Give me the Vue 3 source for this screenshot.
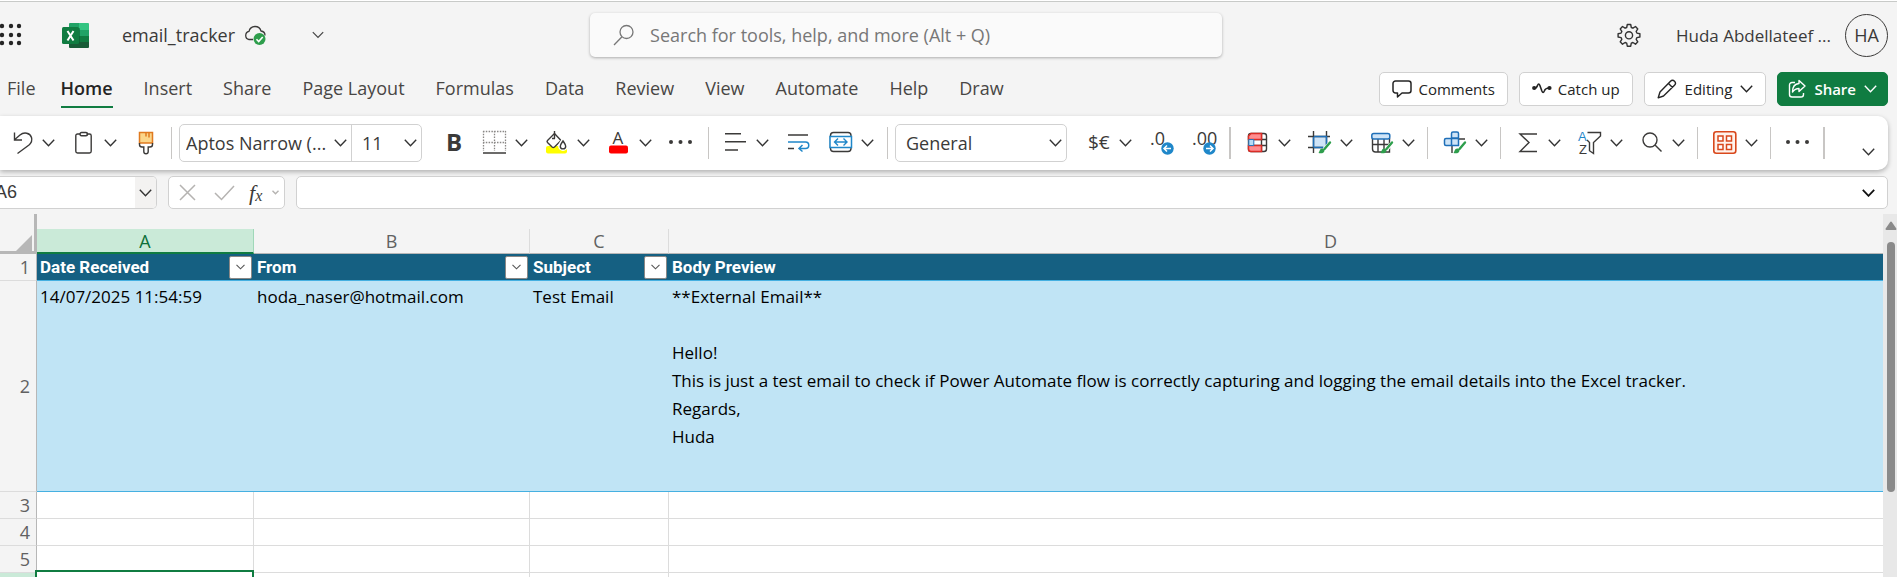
<script setup>
import { ref } from 'vue'

const ink = '#3b3a39'
const line = `fill="none" stroke="${ink}" stroke-width="1.4"`
const brush = '<path d="M22.5 11.5L16 19" fill="none" stroke="#fff" stroke-width="4"/><path d="M22 11.5l-5.500 6.500" fill="none" stroke="#2e9e4c" stroke-width="2.4" stroke-linecap="round"/><path d="M10.500 22c1-.8 1-4.500 3.800-4.500 2 0 3 2.500 1.200 4-1.300 1-3.300 1-5 .5z" fill="#2e9e4c"/>'

const icons = {
  undo: `<path ${line} d="M4.500 1.500v7.500H12M4.500 8.800L10 4c4-3.300 10-2.200 11.500 2.500.9 3-.3 5.500-2.500 7.500L7.500 22.500"/>`,
  paste: `<path ${line} d="M8.500 3H5.500a1.700 1.700 0 0 0-1.700 1.700v15.600A1.700 1.700 0 0 0 5.500 22h12a1.700 1.700 0 0 0 1.700-1.700V4.700A1.700 1.700 0 0 0 17.500 3h-3"/><rect ${line} x="8" y="1.500" width="7.500" height="3.300" rx="1.500"/>`,
  painter: `<path d="M5.500 1.500h13V12h-13z" fill="#fbd68a" stroke="#e07a1f" stroke-width="1.500"/><path d="M12 2v3.500M15 2v4.500" stroke="#e07a1f" stroke-width="1.500"/><path ${line} d="M5.500 12v1.500A2.500 2.500 0 0 0 8 16h1.800v4.500a2.200 2.200 0 0 0 4.400 0V16H16a2.500 2.500 0 0 0 2.500-2.500V12"/>`,
  bold: `<text x="4" y="20" font-size="24" font-weight="700" fill="${ink}">B</text>`,
  borders: `<path d="M0 .5h23M0 11.500h23M.5 0v20M11.500 0v20M22.500 0v20" stroke="#8a8886" stroke-width="1.300" stroke-dasharray="1.500 1.300"/><path d="M0 22h23" stroke="${ink}" stroke-width="1.500"/>`,
  fill: `<rect x="1" y="15" width="21" height="7.500" rx="2" fill="#ff0"/><path d="M2.500 9.500L9.500 2.500l6.500 7-6.500 6.500q-1.200 1-2.400 0L2.500 11.500q-.9-1 0-2z" fill="#fff" stroke="${ink}" stroke-width="1.400"/><path ${line} d="M9.500 0v7.500M7 7.500h3"/><path d="M18 9.500c-1.800 3-2.900 4-2.900 5.600a2.900 2.900 0 0 0 5.800 0c0-1.600-1.100-2.600-2.900-5.600z" fill="#fff" stroke="#fff" stroke-width="4"/><path d="M18 10c-1.800 2.700-2.700 3.700-2.700 5.200a2.700 2.700 0 0 0 5.400 0c0-1.500-.9-2.500-2.700-5.200z" fill="#fff" stroke="${ink}" stroke-width="1.400"/>`,
  color: `<text x="5.500" y="12.500" font-size="17" fill="${ink}">A</text><rect x="2" y="14.500" width="19" height="8" rx="2" fill="#f00"/>`,
  more: `<g fill="${ink}"><circle cx="2" cy="11" r="2"/><circle cx="11.500" cy="11" r="2"/><circle cx="21" cy="11" r="2"/></g>`,
  align: `<path ${line} d="M1 2.800h16M1 10.800h21M1 19h13"/>`,
  wrap: `<path ${line} d="M1 4h20M1 17.500h6"/><path d="M1 11h17.500a3.200 3.200 0 0 1 0 6.500H12m3.500-3.500L12 17.500l3.500 3" fill="none" stroke="#1f87c9" stroke-width="1.500"/>`,
  merge: `<rect x="1.500" y="1.500" width="20.500" height="19" rx="3" ${line}/><path d="M1 5.500h21.500v11H1z" fill="#fff" stroke="#1f87c9" stroke-width="1.500"/><path d="M5.500 11h12.500M9 7.500L5.500 11 9 14.500M14.500 7.500L18 11l-3.500 3.500" fill="none" stroke="#1f87c9" stroke-width="1.400"/>`,
  currency: `<text x="1" y="18" font-size="19" fill="${ink}">$€</text>`,
  lessDecimals: `<text x="0" y="14" font-size="18" fill="${ink}">.0</text><circle cx="17.500" cy="17.500" r="6.200" fill="#1f87c9"/><path d="M21 17.500h-7m3-3l-3 3 3 3" fill="none" stroke="#fff" stroke-width="1.500"/>`,
  moreDecimals: `<text x="0" y="14" font-size="18" fill="${ink}">.00</text><circle cx="17.500" cy="17.500" r="6.200" fill="#1f87c9"/><path d="M14 17.500h7m-3-3l3 3-3 3" fill="none" stroke="#fff" stroke-width="1.500"/>`,
  conditional: `<rect x="2.500" y="2.500" width="18" height="18" rx="2.500" ${line}/><path ${line} d="M15.500 2.500v18M3 8.500h17.500M3 14.500h17.500"/><path d="M5 2.500h10.500v6h-13v-3.500zM2.500 14.500h13v6H5a2.500 2.500 0 0 1-2.500-2.500z" fill="#ff8d90" stroke="#d92d26" stroke-width="1.500"/><path d="M2.800 8.500h5v6h-5z" fill="#b8dcf5" stroke="#2a74b8"/>`,
  cellStyles: `<path d="M5.500 5.500h13v11h-13z" fill="#cfe4f7"/><path ${line} d="M5.500 0v22M18.500 0v16M0 5.500h22M0 16.500h15"/><path d="M6 5.500h12.500v8M5.500 16.500h10M5.500 6v10" fill="none" stroke="#1f6fb8" stroke-width="1.500"/>${brush}`,
  tableStyles: `<path ${line} d="M2.500 7v11a3 3 0 0 0 3 3h14V7M8 8v13M14 8v13M2.500 13.500h17"/><rect x="1.800" y="2.500" width="18" height="5.500" rx="2" fill="#cfe4f7" stroke="#1f6fb8" stroke-width="1.500"/>${brush}`,
  insert: `<path ${line} d="M9 15v7M15 8h7M9 22v-5"/><path d="M10 1h4q1.500 0 1.500 1.500V7H8.500V2.500Q8.500 1 10 1zM3 7.500h5.500v7H3q-1.500 0-1.500-1.500V9q0-1.500 1.500-1.500zM8.500 7.500h7v7h-7z" fill="#cfe4f7" stroke="#1f6fb8" stroke-width="1.500"/>${brush}`,
  sum: `<path ${line} d="M21 3H4l9 8.500L4 20.500h17"/>`,
  sort: `<g font-family="Liberation Sans, Arial, sans-serif" font-size="13"><text x="0" y="10" fill="#1f87c9">A</text><text x="1" y="23" fill="${ink}">Z</text></g><path ${line} d="M9.500 1.500h13V5l-7 6.500v11l-4-2.800v-8.200L9 9"/>`,
  find: `<circle cx="10" cy="9" r="7" ${line}/><path ${line} d="M15 14l6.500 6.500"/>`,
  addins: `<rect x=".8" y=".8" width="22" height="21.500" rx="2.500" fill="#fff3ec" stroke="#d9481c" stroke-width="1.600"/><path d="M5 5h5v5H5zM13.500 5h5v5h-5zM5 13.500h5v5H5zM13.500 13.500h5v5h-5z" fill="#fff" stroke="#d9481c" stroke-width="1.500"/>`,
}

const groups = [
  { key: 'edit', end: 'tight', tools: [['undo', 'Undo', 1], ['paste', 'Paste', 1], ['painter', 'Format Painter', 0]] },
  { key: 'font', font: true, end: 'wide', tools: [['bold', 'Bold', 0], ['borders', 'Borders', 1], ['fill', 'Fill Color', 1], ['color', 'Font Color', 1], ['more', 'More Font Options', 0]] },
  { key: 'align', end: 'tight', tools: [['align', 'Align', 1], ['wrap', 'Wrap Text', 0], ['merge', 'Merge', 1]] },
  { key: 'number', number: true, end: 'thick', tools: [['currency', 'Currency', 1], ['lessDecimals', 'Decrease Decimal', 0], ['moreDecimals', 'Increase Decimal', 0]] },
  { key: 'styles', end: '', tools: [['conditional', 'Conditional Formatting', 1], ['cellStyles', 'Cell Styles', 1], ['tableStyles', 'Format as Table', 1]] },
  { key: 'cells', end: '', tools: [['insert', 'Insert Cells', 1]] },
  { key: 'analysis', end: '', tools: [['sum', 'AutoSum', 1], ['sort', 'Sort and Filter', 1], ['find', 'Find', 1]] },
  { key: 'addins', end: '', tools: [['addins', 'Add-ins', 1]] },
  { key: 'more', end: 'thick', tools: [['more', 'More Options', 0]] },
]

const tabs = ['File', 'Home', 'Insert', 'Share', 'Page Layout', 'Formulas', 'Data', 'Review', 'View', 'Automate', 'Help', 'Draw']
const headings = ['Date Received', 'From', 'Subject', 'Body Preview']
const body = `**External Email**

Hello!
This is just a test email to check if Power Automate flow is correctly capturing and logging the email details into the Excel tracker.
Regards,
Huda`
const record = ['14/07/2025 11:54:59', 'hoda_naser@hotmail.com', 'Test Email', body]
const cellName = ref('A6')
const formula = ref('')
const search = ref('')
</script>

<template>
  <div class="app">
    <header class="topbar">
      <button class="plain" aria-label="App launcher">
        <svg width="22" height="24" viewBox="0 0 22 24" fill="#242424">
          <template v-for="y in [3, 12, 20]" :key="y">
            <circle v-for="x in [2, 11, 19]" :key="x" :cx="x" :cy="y" r="2.2" />
          </template>
        </svg>
      </button>
      <svg class="logo" width="27" height="25" viewBox="0 0 27 25">
        <path d="M8 0h9v7H7V1q0-1 1-1z" fill="#21a366" />
        <path d="M17 0h9q1 0 1 1v6H17z" fill="#33c481" />
        <path d="M7 7h10v6H7z" fill="#107c41" />
        <path d="M17 7h10v6H17z" fill="#21a366" />
        <path d="M17 13h10v6H17z" fill="#107c41" />
        <path d="M7 13h10v6h10v5q0 1-1 1H8q-1 0-1-1z" fill="#185c37" />
        <path d="M7 5h10q1 0 1 1v15H7z" fill="#0b5c30" opacity=".6" />
        <rect y="4" width="17" height="17" rx="1.500" fill="#107c41" />
        <path d="M5.500 8l6 9.500M11.500 8l-6 9.500" stroke="#fff" stroke-width="2" />
      </svg>
      <span class="filename">email_tracker</span>
      <svg class="cloud" width="22" height="22" viewBox="0 0 22 22" fill="none">
        <path d="M9 15.500H5A4.200 4.200 0 0 1 5 7.300 6.200 6.200 0 0 1 17 7c2.500.3 4 2 4 4.500" stroke="#3b3a39" stroke-width="1.300" />
        <circle cx="15.500" cy="15" r="6" fill="#2e9e4c" />
        <path d="M12.500 15.300l2.200 2.200 4-4.500" stroke="#fff" stroke-width="1.600" />
      </svg>
      <button class="plain title-menu" aria-label="File details">
        <svg width="12" height="8" viewBox="0 0 12 8" fill="none" stroke="#444" stroke-width="1.200"><path d="M.8 1.200L6 6.500l5.200-5.300" /></svg>
      </button>
      <label class="search">
        <svg width="22" height="22" viewBox="0 0 22 22" fill="none" stroke="#777" stroke-width="1.300">
          <circle cx="13.500" cy="8" r="6.500" /><path d="M9 12.800L1 21" />
        </svg>
        <input v-model="search" type="text" aria-label="Search" placeholder="Search for tools, help, and more (Alt + Q)">
      </label>
      <div class="account">
        <button class="plain" aria-label="Settings">
          <svg width="24" height="24" viewBox="0 0 24 24" fill="none" stroke="#333" stroke-width="1.400" stroke-linejoin="round">
            <path d="M10.300 1.500h3.400l.6 3 1.600.7 2.600-1.700 2.300 2.400-1.600 2.500.7 1.700 3 .6v3.300l-3 .6-.7 1.700 1.600 2.500-2.300 2.400-2.600-1.700-1.600.7-.6 3h-3.400l-.6-3-1.600-.7-2.600 1.700-2.300-2.400 1.600-2.500-.7-1.700-3-.6v-3.300l3-.6.7-1.700-1.600-2.500 2.300-2.400 2.600 1.700 1.600-.7z" />
            <circle cx="12" cy="12.300" r="3.600" />
          </svg>
        </button>
        <span class="user">Huda Abdellateef ...</span>
        <button class="avatar" aria-label="Account manager">HA</button>
      </div>
    </header>

    <div class="tabbar">
      <nav class="tabs" aria-label="Ribbon tabs">
        <a v-for="tab in tabs" :key="tab" href="#" :class="{ active: tab === 'Home' }">{{ tab }}</a>
      </nav>
      <div class="actions">
        <button class="action">
          <svg width="20" height="20" viewBox="0 0 20 20" fill="none" stroke="#242424" stroke-width="1.500" stroke-linejoin="round">
            <path d="M3.500 2h13a2.500 2.500 0 0 1 2.500 2.500v7a2.500 2.500 0 0 1-2.500 2.500H10l-4.500 4V14h-2A2.500 2.500 0 0 1 1 11.500v-7A2.500 2.500 0 0 1 3.500 2z" />
          </svg>
          Comments
        </button>
        <button class="action">
          <svg width="20" height="20" viewBox="0 0 20 20" fill="none" stroke="#242424" stroke-width="1.600">
            <path d="M2 9.500q2.500 0 3.500-3 1.200-3 2.400 0l2 5.500q1.200 3 2.400 0 1-3 5-3" />
            <circle cx="2.200" cy="9" r="1.300" fill="#242424" /><circle cx="17.500" cy="9" r="1.300" fill="#242424" />
          </svg>
          Catch up
        </button>
        <button class="action menu">
          <svg width="20" height="20" viewBox="0 0 20 20" fill="none" stroke="#242424" stroke-width="1.400" stroke-linejoin="round">
            <path d="M13.500 2.200q2-2 4 0t0 4L6.500 17 1.200 18.800 3 13z M11.500 4.500l4 4" />
          </svg>
          Editing
          <svg width="13" height="8" viewBox="0 0 13 8" fill="none" stroke="#242424" stroke-width="1.400"><path d="M.8.8l5.700 6 5.700-6" /></svg>
        </button>
        <button class="action menu primary">
          <svg width="18" height="20" viewBox="0 0 18 20" fill="none" stroke="#fff" stroke-width="1.400" stroke-linejoin="round">
            <path d="M7 3.500H4A2.500 2.500 0 0 0 1.500 6v9.500A2.500 2.500 0 0 0 4 18h9a2.500 2.500 0 0 0 2.500-2.500V14" />
            <path d="M11 1.500L17 7l-6 5.500V9.500q-4 0-6.500 3.500 0-8 6.500-8.500z" />
          </svg>
          Share
          <svg width="13" height="8" viewBox="0 0 13 8" fill="none" stroke="#fff" stroke-width="1.400"><path d="M.8.8l5.700 6 5.700-6" /></svg>
        </button>
      </div>
    </div>

    <div class="ribbon" role="toolbar" aria-label="Home">
      <template v-for="group in groups" :key="group.key">
        <div v-if="group.font" class="fontbox">
          <label class="combo name">
            <select aria-label="Font name"><option>Aptos Narrow (...</option></select>
            <svg width="13" height="8" viewBox="0 0 13 8"><path d="M.8.8l5.700 6 5.700-6" /></svg>
          </label>
          <label class="combo size">
            <select aria-label="Font size"><option>11</option></select>
            <svg width="13" height="8" viewBox="0 0 13 8"><path d="M.8.8l5.700 6 5.700-6" /></svg>
          </label>
        </div>
        <label v-if="group.number" class="combo format">
          <select aria-label="Number format"><option>General</option></select>
          <svg width="13" height="8" viewBox="0 0 13 8"><path d="M.8.8l5.700 6 5.700-6" /></svg>
        </label>
        <div class="group" :class="group.key">
          <button v-for="[icon, label, menu] in group.tools" :key="icon" class="tool" :aria-label="label">
            <svg class="icon" width="24" height="24" viewBox="0 0 24 24" v-html="icons[icon]"></svg>
            <svg v-if="menu" class="chevron" width="13" height="8" viewBox="0 0 13 8"><path d="M.8.8l5.700 6 5.700-6" /></svg>
          </button>
        </div>
        <span class="sep" :class="group.end"></span>
      </template>
      <button class="plain collapse" aria-label="Ribbon display options">
        <svg class="chevron" width="13" height="8" viewBox="0 0 13 8"><path d="M.8.8l5.700 6 5.700-6" /></svg>
      </button>
    </div>

    <div class="formulabar">
      <div class="namebox">
        <input v-model="cellName" type="text" aria-label="Name box">
        <button aria-label="Name list">
          <svg class="chevron" width="13" height="8" viewBox="0 0 13 8"><path d="M.8.8l5.700 6 5.700-6" /></svg>
        </button>
      </div>
      <div class="fx">
        <button class="plain" aria-label="Cancel">
          <svg width="17" height="17" viewBox="0 0 17 17" fill="none" stroke="#b5b3b1" stroke-width="1.500"><path d="M1 1l15 15M16 1L1 16" /></svg>
        </button>
        <button class="plain enter" aria-label="Enter">
          <svg width="21" height="16" viewBox="0 0 21 16" fill="none" stroke="#b5b3b1" stroke-width="1.500"><path d="M1 8l6.500 6.500L20 1" /></svg>
        </button>
        <button class="plain fn" aria-label="Insert function">
          <i>f</i><i class="x">x</i>
          <svg width="7" height="5" viewBox="0 0 7 5" fill="none" stroke="#b5b3b1" stroke-width="1.400"><path d="M.5.8l3 3 3-3" /></svg>
        </button>
      </div>
      <div class="formula">
        <input v-model="formula" type="text" aria-label="Formula bar">
        <button class="plain" aria-label="Expand formula bar">
          <svg class="chevron" width="13" height="8" viewBox="0 0 13 8"><path d="M.8.8l5.700 6 5.700-6" /></svg>
        </button>
      </div>
    </div>

    <main class="sheet">
      <div class="viewport">
        <table>
          <colgroup><col class="c0"><col class="ca"><col class="cb"><col class="cc"><col class="cd"></colgroup>
          <thead>
            <tr>
              <th class="corner"><svg width="16" height="16" viewBox="0 0 16 16"><path d="M16 0v16H0z" fill="#b7b7b7" /></svg></th>
              <th v-for="col in ['A', 'B', 'C', 'D']" :key="col" class="col" scope="col"><div :class="{ current: col === 'A' }">{{ col }}</div></th>
            </tr>
          </thead>
          <tbody>
            <tr class="titles">
              <th scope="row">1</th>
              <td v-for="(heading, i) in headings" :key="heading">
                <div class="title">
                  {{ heading }}
                  <button v-if="i < 3" :aria-label="'Filter ' + heading">
                    <svg width="9" height="6" viewBox="0 0 9 6" fill="none" stroke="#555" stroke-width="1.100"><path d="M.5.8l4 4 4-4" /></svg>
                  </button>
                </div>
              </td>
            </tr>
            <tr class="record">
              <th scope="row">2</th>
              <td v-for="(value, i) in record" :key="i">{{ value }}</td>
            </tr>
            <tr v-for="n in [3, 4, 5]" :key="n">
              <th scope="row">{{ n }}</th><td></td><td></td><td></td><td></td>
            </tr>
            <tr>
              <th class="current" scope="row" aria-label="6"></th><td class="selected"></td><td></td><td></td><td></td>
            </tr>
          </tbody>
        </table>
      </div>
      <div class="scrollbar">
        <svg width="12" height="10" viewBox="0 0 12 10"><path d="M6 1.500L10.500 8h-9z" fill="#8a8a8a" stroke="#8a8a8a" stroke-width="2" stroke-linejoin="round" /></svg>
        <span class="thumb"></span>
      </div>
    </main>
  </div>
</template>

<style>
body { margin: 0; }
</style>

<style scoped>
.app {
  --ui: "Open Sans", "Noto Sans", sans-serif;
  display: flex;
  flex-direction: column;
  height: 100vh;
  overflow: hidden;
  box-sizing: border-box;
  border-top: 1px solid #fff;
  background: #f4f4f4;
  font-family: var(--ui);
  font-size: 18px;
  color: #3b3a39;
}
.app * { box-sizing: border-box; }
button, input, select { font: inherit; color: inherit; margin: 0; }
svg { display: block; flex: none; }
.plain { display: flex; align-items: center; padding: 0; border: 0; background: none; }
.chevron, .combo svg { fill: none; stroke: #333; stroke-width: 1.4; }

.topbar {
  display: flex;
  align-items: center;
  flex: none;
  height: 67px;
  border-top: 1px solid #c8cac8;
}
.logo { margin-left: 40px; }
.filename { margin-left: 33px; }
.cloud { margin-left: 9px; }
.title-menu { margin-left: 46px; }
.search {
  display: flex;
  align-items: center;
  gap: 15px;
  width: 632px;
  height: 44px;
  margin-left: 266px;
  padding: 0 23px;
  border-radius: 5px;
  background: #fafafa;
  box-shadow: 0 1px 3px rgba(0, 0, 0, .3);
}
.search input { flex: 1; min-width: 0; padding: 0; border: 0; outline: 0; background: none; }
.search input::placeholder { color: #777; opacity: 1; }
.account { display: flex; align-items: center; margin-left: auto; padding-right: 9px; }
.user { margin-left: 35px; font-size: 17px; }
.avatar {
  width: 43px;
  height: 43px;
  margin-left: 14px;
  padding: 0;
  border: 1px solid #3b3a39;
  border-radius: 50%;
  background: none;
}

.tabbar { display: flex; align-items: flex-start; flex: none; height: 48px; padding: 4px 9px 0 7px; }
.tabs { display: flex; gap: 31px; }
.tabs a { height: 36px; line-height: 32px; color: #484644; text-decoration: none; white-space: nowrap; }
.tabs a:first-child { margin-right: -6px; }
.tabs .active { border-bottom: 2px solid #107c41; color: #242424; font-weight: 600; }
.actions { display: flex; gap: 11px; margin-left: auto; }
.action {
  display: flex;
  align-items: center;
  gap: 6px;
  height: 34px;
  padding: 0 12px;
  border: 1px solid #d1d1d1;
  border-radius: 5px;
  background: #fff;
  color: #242424;
  font-size: 15px;
}
.action.menu { gap: 8px; }
.action.primary { padding: 0 10px; border-color: #107c41; background: #107c41; color: #fff; font-weight: 600; }

.ribbon {
  display: flex;
  align-items: center;
  flex: none;
  height: 54px;
  margin-right: 9px;
  padding-left: 10px;
  border-radius: 0 10px 10px 0;
  background: #fff;
  box-shadow: 0 2px 5px rgba(0, 0, 0, .28);
}
.group { display: flex; gap: 17px; }
.group.align, .group.number { gap: 18px; }
.tool { display: flex; align-items: center; gap: 8px; padding: 0; border: 0; background: none; }
.icon { overflow: visible; font-family: var(--ui); }
.sep { flex: none; width: 1px; height: 32px; margin: 0 15px 0 12px; background: #c8c6c4; }
.sep.tight { margin: 0 7px 0 13px; }
.sep.wide { margin-left: 15px; }
.sep.thick { width: 2px; margin-left: 13px; }
.collapse { align-self: flex-end; margin: 0 13px 14px auto; }
.fontbox { display: flex; height: 38px; margin-right: 20px; border: 1px solid #d1d1d1; border-radius: 5px; }
.combo { display: grid; align-items: center; }
.combo select {
  grid-area: 1 / 1;
  width: 100%;
  height: 36px;
  padding: 0 0 0 6px;
  border: 0;
  background: none;
  appearance: none;
}
.combo svg { grid-area: 1 / 1; justify-self: end; margin-right: 4px; pointer-events: none; }
.name { width: 172px; border-right: 1px solid #d1d1d1; }
.size { width: 69px; }
.size select { padding-left: 10px; }
.format { width: 172px; margin-right: 20px; border: 1px solid #d1d1d1; border-radius: 5px; }
.format select { padding-left: 10px; }

.formulabar { display: flex; flex: none; gap: 11px; height: 33px; margin: 6px 9px 5px 0; }
.namebox, .fx, .formula { display: flex; align-items: center; border: 1px solid #d1d1d1; border-radius: 5px; background: #fff; }
.namebox { width: 157px; border-left: 0; border-radius: 0 5px 5px 0; overflow: hidden; }
.namebox input {
  flex: 1;
  min-width: 0;
  height: 100%;
  padding: 0;
  border: 0;
  outline: 0;
  text-indent: -5px;
  font: 18px "Liberation Sans", Arial, sans-serif;
}
.namebox button { display: grid; place-items: center; width: 21px; height: 100%; padding: 0; border: 0; background: #f3f2f1; }
.fx { gap: 14px; width: 117px; padding: 0 5px 0 10px; }
.enter { margin-left: 4px; }
.fn { font-family: "Liberation Serif", serif; font-size: 22px; line-height: 24px; }
.fn .x { margin-right: 8px; padding-top: 6px; font-size: 16px; }
.fn svg { margin-left: 2px; }
.formula { flex: 1; padding-right: 12px; }
.formula input { flex: 1; min-width: 0; border: 0; outline: 0; background: none; }
.formula .chevron { stroke: #111; stroke-width: 1.8; }

.sheet { display: flex; flex: 1; min-height: 0; overflow: hidden; }
.viewport { flex: 1; min-width: 0; overflow: hidden; }
table { width: 1993px; table-layout: fixed; border-collapse: separate; border-spacing: 0; background: #fff; }
.c0 { width: 37px; }
.ca { width: 217px; }
.cb { width: 276px; }
.cc { width: 139px; }
.cd { width: 1324px; }
th, td { padding: 0; }
th { background: #f4f4f4; color: #616161; font-weight: 400; }
.corner { height: 40px; padding: 19px 2px 2px 16px; border-right: 3px solid #b7b7b7; border-bottom: 3px solid #b7b7b7; }
.corner svg { margin-bottom: -3px; }
.col { padding-top: 15px; }
.col div { height: 25px; line-height: 24px; border-right: 1px solid #dcdcdc; border-bottom: 1px solid #b7b7b7; }
.col .current { border-right-color: #a0d8b9; border-bottom: 2px solid #107c41; background: #caead8; color: #0e703b; }
tbody th { height: 27px; padding-right: 6px; border-right: 1px solid #b7b7b7; border-bottom: 1px solid #dcdcdc; line-height: 26px; text-align: right; }
tbody .current { background: #caead8; color: #0e703b; }
td { height: 27px; border-right: 1px solid #dcdcdc; border-bottom: 1px solid #dcdcdc; }
.titles td { border-right: 0; border-bottom-color: #45b0e1; background: #156082; }
.title {
  display: flex;
  align-items: center;
  justify-content: space-between;
  height: 26px;
  padding: 0 2px 0 3px;
  color: #fff;
  font: 700 17px Roboto, "Liberation Sans", sans-serif;
}
.title button { display: grid; place-items: center; width: 23px; height: 23px; padding: 0; border: 1px solid #8a8886; border-radius: 2px; background: #fff; }
.record td {
  height: 211px;
  padding: 2px 3px;
  border-right: 0;
  border-bottom-color: #45b0e1;
  background: #c0e4f5;
  color: #000;
  font: 17px/28px "Open Sans", "Noto Sans", sans-serif;
  vertical-align: top;
  white-space: pre-wrap;
}
.selected { position: relative; }
.selected::after { content: ""; position: absolute; inset: -3px -1px 0 -2px; border: 2px solid #107c41; background: #fff; }
.scrollbar { display: flex; flex: none; flex-direction: column; align-items: center; gap: 11px; width: 14px; padding: 7px 0 0 1px; background: #e8e8e8; }
.thumb { width: 8px; height: 250px; border-radius: 4px; background: #8a8a8a; }
</style>
